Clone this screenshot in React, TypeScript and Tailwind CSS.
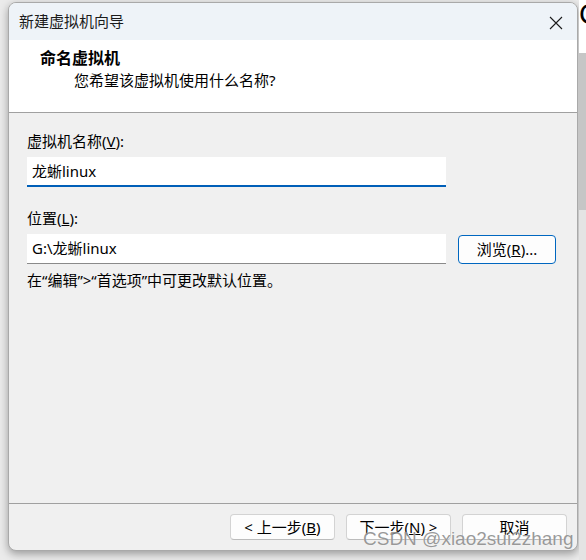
import React from "react";

const font = "font-['Noto_Sans','Noto_Sans_CJK_SC',sans-serif]";

function Btn({ children }: { children: React.ReactNode }) {
  return (
    <button className="h-[26px] w-[105px] rounded-[4px] border border-[#d3d3d3] border-b-[#bcbcbc] bg-[#fdfdfd] text-[15px] text-black flex items-center justify-center">
      {children}
    </button>
  );
}

export default function App() {
  return (
    <div className={`w-[586px] h-[560px] bg-[#ebebeb] flex overflow-hidden ${font} relative`}>
      <div className="w-[8px] shrink-0" />
      <div className="pt-[2px] shrink-0">
        <div className="w-[570px] h-[549px] flex flex-col border border-[#a9a9a9] rounded-[8px] overflow-hidden bg-[#f0f0f0] shadow-[0_3px_9px_rgba(0,0,0,0.35)]">
          {/* title bar */}
          <div className="h-[37px] shrink-0 bg-[#eef3f8] flex items-center justify-between pl-[10px] pr-[14px]">
            <span className="text-[15px] text-[#1b1b1b]">新建虚拟机向导</span>
            <svg width="14" height="14" viewBox="0 0 14 14" className="mt-[2px]">
              <path d="M1 1 L13 13 M13 1 L1 13" stroke="#1b1b1b" strokeWidth="1.1" />
            </svg>
          </div>
          {/* header */}
          <div className="h-[73px] shrink-0 bg-white border-b border-[#a0a0a0] pt-[8px]">
            <div className="pl-[31px] text-[16px] font-bold text-black leading-[21px]">命名虚拟机</div>
            <div className="pl-[65px] text-[15px] text-black leading-[20px] mt-[1px]">您希望该虚拟机使用什么名称?</div>
          </div>
          {/* body */}
          <div className="flex-1 pl-[18px] pt-[18px] text-[15px] text-black">
            <div className="leading-[20px]">
              虚拟机名称(<span className="underline">V</span>):
            </div>
            <div className="mt-[6px] w-[419px] h-[30px] bg-white border-b-2 border-[#005fb8] flex items-center pl-[5px] leading-none">
              龙蜥linux
            </div>
            <div className="mt-[21px] leading-[20px]">
              位置(<span className="underline">L</span>):
            </div>
            <div className="mt-[6px] flex items-center gap-[12px]">
              <div className="w-[419px] h-[30px] bg-white border-b border-[#8a8a8a] flex items-center pl-[5px]">
                G:\龙蜥linux
              </div>
              <button className="w-[98px] h-[29px] rounded-[4px] border border-[#0067c0] bg-[#fdfdfd] flex items-center justify-center">
                浏览(<span className="underline">R</span>)...
              </button>
            </div>
            <div className="mt-[6px] leading-[20px]">在“编辑”&gt;“首选项”中可更改默认位置。</div>
          </div>
          {/* footer */}
          <div className="h-[47px] shrink-0 border-t border-[#a0a0a0] flex justify-end items-start pt-[10px] pr-[10px] gap-[11px]">
            <Btn>
              &lt; 上一步(<span className="underline">B</span>)
            </Btn>
            <Btn>
              下一步(<span className="underline">N</span>) &gt;
            </Btn>
            <Btn>取消</Btn>
          </div>
        </div>
      </div>
      {/* right edge background */}
      <div className="flex-1 flex flex-col ml-[1px]">
        <div className="h-[53px] bg-white overflow-hidden">
          <span className="block text-[29px] leading-[29px] text-black font-['Liberation_Sans',sans-serif]">C</span>
        </div>
        <div className="h-[157px] bg-[#c6c6c6]" />
        <div className="flex-1 bg-[#e4e4e4]" />
      </div>
      {/* watermark */}
      <div className="absolute left-[363px] top-[528px] text-[19px] leading-[22px] text-[rgba(120,120,120,0.75)] font-['Liberation_Sans',sans-serif] [text-shadow:0_0_1px_rgba(255,255,255,0.8)]">
        CSDN @xiao2sui2zhang
      </div>
    </div>
  );
}
